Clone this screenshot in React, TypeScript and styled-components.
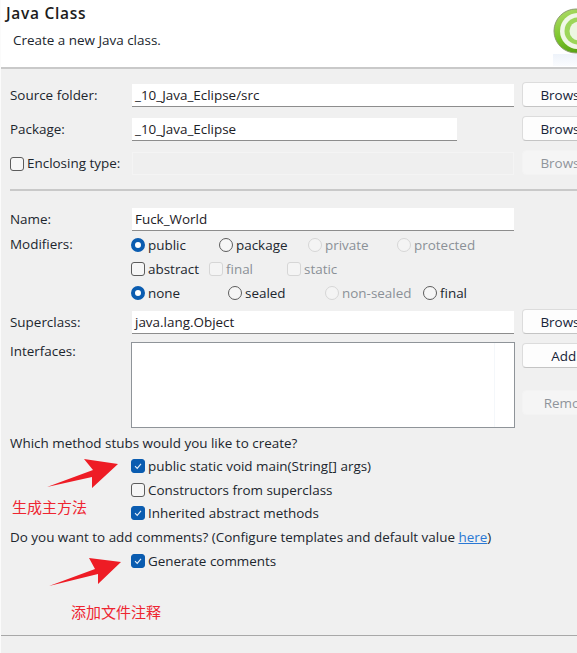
import React from "react";
import styled, { createGlobalStyle } from "styled-components";

const Global = createGlobalStyle`
  html, body { margin: 0; padding: 0; background: #f0f0f0; }
  body { font-family: "Open Sans", "Noto Sans", sans-serif; font-size: 13.45px; color: #20262e; }
`;

const Page = styled.div`
  position: relative;
  width: 577px;
  height: 653px;
  overflow: hidden;
  background: #f0f0f0;
  border-left: 1px solid #fbfbfb;
  box-sizing: border-box;
`;

const Header = styled.header`
  height: 67px;
  background: #fff;
  border-bottom: 2px solid #c9c9c9;
  display: flex;
  justify-content: space-between;
  box-sizing: content-box;
`;

const HeaderText = styled.div`
  display: flex;
  flex-direction: column;
  padding: 3px 0 0 5px;
`;

const Title = styled.h1`
  margin: 0;
  font-size: 15.5px;
  line-height: 20px;
  font-weight: 600;
  letter-spacing: 0.7px;
  color: #1c1c1c;
`;

const Subtitle = styled.p`
  margin: 8px 0 0 7px;
  line-height: 18px;
`;

const Logo = styled.svg`
  flex: none;
  margin-top: 6px;
`;

const Form = styled.main`
  padding: 15px 0 0 9px;
  height: 567px;
  box-sizing: border-box;
  border-bottom: 1px solid #a8a8a8;
`;

const Row = styled.div<{ $mt?: number; $h?: number }>`
  display: flex;
  align-items: center;
  height: ${(p) => p.$h ?? 23}px;
  margin-top: ${(p) => p.$mt ?? 0}px;
  white-space: nowrap;
`;

const Label = styled.span<{ $w?: number }>`
  flex: none;
  width: ${(p) => p.$w ?? 122}px;
  margin-bottom: 2px;
`;

const Field = styled.div<{ $w?: number; $disabled?: boolean }>`
  flex: none;
  box-sizing: border-box;
  width: ${(p) => p.$w ?? 382}px;
  height: 23px;
  line-height: 22px;
  padding-left: 3px;
  color: #1c2026;
  background: ${(p) => (p.$disabled ? "#efefef" : "#fff")};
  border: ${(p) => (p.$disabled ? "1px solid #f4f4f4" : "none")};
  border-bottom: ${(p) => (p.$disabled ? "1px solid #f4f4f4" : "1px solid #8d8d8d")};
`;

const Button = styled.div<{ $disabled?: boolean; $gap?: number }>`
  flex: none;
  box-sizing: border-box;
  width: 94px;
  height: 25px;
  margin: -1px 0 1px ${(p) => p.$gap ?? 8}px;
  text-align: center;
  line-height: 25px;
  border-radius: 4px;
  background: ${(p) => (p.$disabled ? "#f5f5f5" : "#fdfdfd")};
  border: 1px solid ${(p) => (p.$disabled ? "#f3f3f3" : "#dcdcdc")};
  border-bottom-color: ${(p) => (p.$disabled ? "#f3f3f3" : "#c4c4c4")};
  color: ${(p) => (p.$disabled ? "#8f949b" : "#162338")};
`;

const Divider = styled.hr`
  margin: 14px 0 17px;
  height: 2px;
  border: none;
  background: #c9c9c9;
`;

const Choice = styled.span<{ $w?: number; $disabled?: boolean }>`
  flex: none;
  display: flex;
  align-items: center;
  gap: 3px;
  width: ${(p) => (p.$w ? `${p.$w}px` : "auto")};
  color: ${(p) => (p.$disabled ? "#8b9097" : "inherit")};
`;

const Indent = styled.span`
  flex: none;
  width: 121px;
`;

const RadioMark = styled.span<{ $on?: boolean; $disabled?: boolean }>`
  flex: none;
  box-sizing: border-box;
  width: 14px;
  height: 14px;
  border-radius: 50%;
  background: ${(p) => (p.$disabled ? "#f4f4f4" : p.$on ? "#fff" : "#f6f6f6")};
  border: ${(p) =>
    p.$on ? "4px solid #0a5cb0" : p.$disabled ? "1px solid #d6d6d6" : "1px solid #5c5c5c"};
`;

const BoxMark = styled.span<{ $on?: boolean; $disabled?: boolean }>`
  flex: none;
  box-sizing: border-box;
  width: 14px;
  height: 14px;
  border-radius: 3px;
  display: flex;
  align-items: center;
  justify-content: center;
  background: ${(p) => (p.$on ? "#0a5cb0" : p.$disabled ? "#f4f4f4" : "#f6f6f6")};
  border: 1px solid ${(p) => (p.$on ? "#0a5cb0" : p.$disabled ? "#d6d6d6" : "#5c5c5c")};
`;

const Interfaces = styled.div`
  flex: none;
  box-sizing: border-box;
  display: flex;
  justify-content: flex-end;
  width: 384px;
  height: 86px;
  background: #fff;
  border: 1px solid #8f9499;
`;

const ScrollGutter = styled.div`
  width: 19px;
  border-left: 1px solid #f4f7fa;
`;

const ButtonColumn = styled.div`
  flex: none;
  display: flex;
  flex-direction: column;
  gap: 22px;
  margin: 2px 0 0 -1px;
`;

const InterfacesRow = styled.div`
  display: flex;
  align-items: flex-start;
  margin-top: 8px;
`;

const InterfacesLabel = styled(Label)`
  width: 121px;
  line-height: 18px;
`;

const Link = styled.a`
  color: #2a78d4;
  text-decoration: underline;
`;

const Note = styled.span<{ $x: number; $y: number }>`
  position: absolute;
  left: ${(p) => p.$x}px;
  top: ${(p) => p.$y}px;
  font-family: "Noto Sans CJK SC", sans-serif;
  font-size: 15px;
  line-height: 20px;
  color: #ee2530;
`;

const Arrow = styled.svg`
  position: absolute;
  left: 0;
  top: 0;
  pointer-events: none;
`;

function Check() {
  return (
    <svg width="10" height="10" viewBox="0 0 10 10" fill="none">
      <path d="M2 5.2 L4.2 7.4 L8 2.8" stroke="#e6f0fa" strokeWidth="1.1" />
    </svg>
  );
}

const Radio = ({ label, on, disabled, w }: { label: string; on?: boolean; disabled?: boolean; w?: number }) => (
  <Choice $w={w} $disabled={disabled}>
    <RadioMark $on={on} $disabled={disabled} />
    {label}
  </Choice>
);

const Box = ({ label, on, disabled, w }: { label: string; on?: boolean; disabled?: boolean; w?: number }) => (
  <Choice $w={w} $disabled={disabled}>
    <BoxMark $on={on} $disabled={disabled}>
      {on && <Check />}
    </BoxMark>
    {label}
  </Choice>
);

export default function App() {
  return (
    <Page>
      <Global />
      <Header>
        <HeaderText>
          <Title>Java Class</Title>
          <Subtitle>Create a new Java class.</Subtitle>
        </HeaderText>
        <Logo width="24" height="60" viewBox="0 0 24 60">
          <defs>
            <linearGradient id="g" x1="0" y1="0" x2="0.4" y2="1">
              <stop offset="0" stopColor="#b4dd70" />
              <stop offset="0.6" stopColor="#7cc62a" />
              <stop offset="1" stopColor="#5aa514" />
            </linearGradient>
            <linearGradient id="r" x1="0" y1="0" x2="0" y2="1">
              <stop offset="0" stopColor="#eef3fa" />
              <stop offset="1" stopColor="#fbfcfe" />
            </linearGradient>
          </defs>
          <rect x="0" y="48" width="24" height="13" fill="url(#r)" />
          <circle cx="23" cy="25" r="22" fill="url(#g)" stroke="#8c9c70" strokeWidth="1" />
          <circle cx="25" cy="25" r="18" fill="#f0f8e6" />
          <circle cx="25" cy="25" r="13.5" fill="#9dd65a" />
          <circle cx="26" cy="25" r="9.5" fill="#edf7e2" />
        </Logo>
      </Header>
      <Form>
        <Row>
          <Label>Source folder:</Label>
          <Field>_10_Java_Eclipse/src</Field>
          <Button>Browse...</Button>
        </Row>
        <Row $mt={11}>
          <Label>Package:</Label>
          <Field $w={325}>_10_Java_Eclipse</Field>
          <Button $gap={65}>Browse...</Button>
        </Row>
        <Row $mt={11}>
          <Choice $w={122}>
            <BoxMark />
            <Label $w={100}>Enclosing type:</Label>
          </Choice>
          <Field $disabled />
          <Button $disabled>Browse...</Button>
        </Row>
        <Divider />
        <Row>
          <Label>Name:</Label>
          <Field>Fuck_World</Field>
        </Row>
        <Row $mt={2} $h={24}>
          <Label $w={121}>Modifiers:</Label>
          <Radio w={88} on label="public" />
          <Radio w={89} label="package" />
          <Radio w={89} disabled label="private" />
          <Radio disabled label="protected" />
        </Row>
        <Row $h={24}>
          <Indent />
          <Box w={78} label="abstract" />
          <Box w={78} disabled label="final" />
          <Box disabled label="static" />
        </Row>
        <Row $h={24}>
          <Indent />
          <Radio w={97} on label="none" />
          <Radio w={97} label="sealed" />
          <Radio w={98} disabled label="non-sealed" />
          <Radio label="final" />
        </Row>
        <Row $mt={6}>
          <Label>Superclass:</Label>
          <Field>java.lang.Object</Field>
          <Button>Browse...</Button>
        </Row>
        <InterfacesRow>
          <InterfacesLabel>Interfaces:</InterfacesLabel>
          <Interfaces>
            <ScrollGutter />
          </Interfaces>
          <ButtonColumn>
            <Button>Add...</Button>
            <Button $disabled>Remove</Button>
          </ButtonColumn>
        </InterfacesRow>
        <Row $mt={3} $h={23}>
          Which method stubs would you like to create?
        </Row>
        <Row $h={24}>
          <Indent />
          <Box on label="public static void main(String[] args)" />
        </Row>
        <Row $h={23}>
          <Indent />
          <Box label="Constructors from superclass" />
        </Row>
        <Row $h={24}>
          <Indent />
          <Box on label="Inherited abstract methods" />
        </Row>
        <Row $h={23}>
          <span>
            Do you want to add comments? (Configure templates and default value <Link>here</Link>)
          </span>
        </Row>
        <Row $h={24} $mt={1}>
          <Indent />
          <Box on label="Generate comments" />
        </Row>
      </Form>
      <Arrow width="577" height="653" viewBox="0 0 577 653">
        <polygon points="46,487 92,470 83,459 117,464 91,488 91,477" fill="#ee1c25" />
        <polygon points="48,586 94,569 88,558 120,562 97,584 97,574" fill="#ee1c25" />
      </Arrow>
      <Note $x={11} $y={497}>生成主方法</Note>
      <Note $x={70} $y={602}>添加文件注释</Note>
    </Page>
  );
}
